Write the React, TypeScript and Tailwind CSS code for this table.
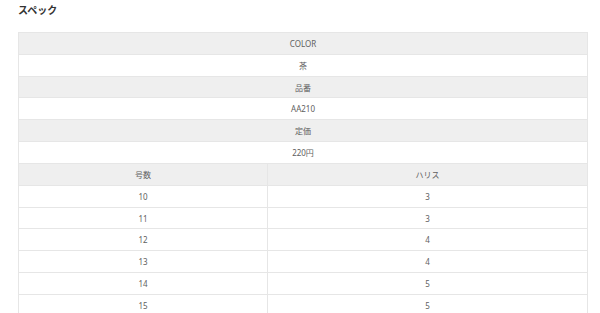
import React from "react";

const font = { fontFamily: '"Noto Sans", "Noto Sans CJK JP", sans-serif' };

function FullRow({ text, head }: { text: string; head?: boolean }) {
  return (
    <div
      className={`h-[21.83px] flex items-center justify-center pt-[1px] border-b border-[#e6e6e6] text-[8px] text-[#606060] ${head ? "bg-[#efefef]" : "bg-white"}`}
    >
      {text}
    </div>
  );
}

function SplitRow({ a, b, head }: { a: string; b: string; head?: boolean }) {
  return (
    <div
      className={`h-[21.83px] grid grid-cols-[249px_1fr] border-b border-[#e6e6e6] text-[8px] text-[#606060] ${head ? "bg-[#efefef]" : "bg-white"}`}
    >
      <div className="flex items-center justify-center pt-[1px] border-r border-[#e6e6e6]">{a}</div>
      <div className="flex items-center justify-center pt-[1px]">{b}</div>
    </div>
  );
}

export default function App() {
  const rows = [
    ["10", "3"],
    ["11", "3"],
    ["12", "4"],
    ["13", "4"],
    ["14", "5"],
    ["15", "5"],
  ];
  return (
    <div className="w-[600px] h-[313px] overflow-hidden bg-white" style={font}>
      <div className="pl-[18px] pt-[3px] h-[32px] text-[10px] font-bold text-[#333] leading-[14px]">スペック</div>
      <div className="ml-[18px] w-[570px] border-l border-r border-t border-[#e6e6e6]">
        <FullRow text="COLOR" head />
        <FullRow text="茶" />
        <FullRow text="品番" head />
        <FullRow text="AA210" />
        <FullRow text="定価" head />
        <FullRow text="220円" />
        <SplitRow a="号数" b="ハリス" head />
        {rows.map(([a, b]) => (
          <SplitRow key={a} a={a} b={b} />
        ))}
      </div>
    </div>
  );
}
